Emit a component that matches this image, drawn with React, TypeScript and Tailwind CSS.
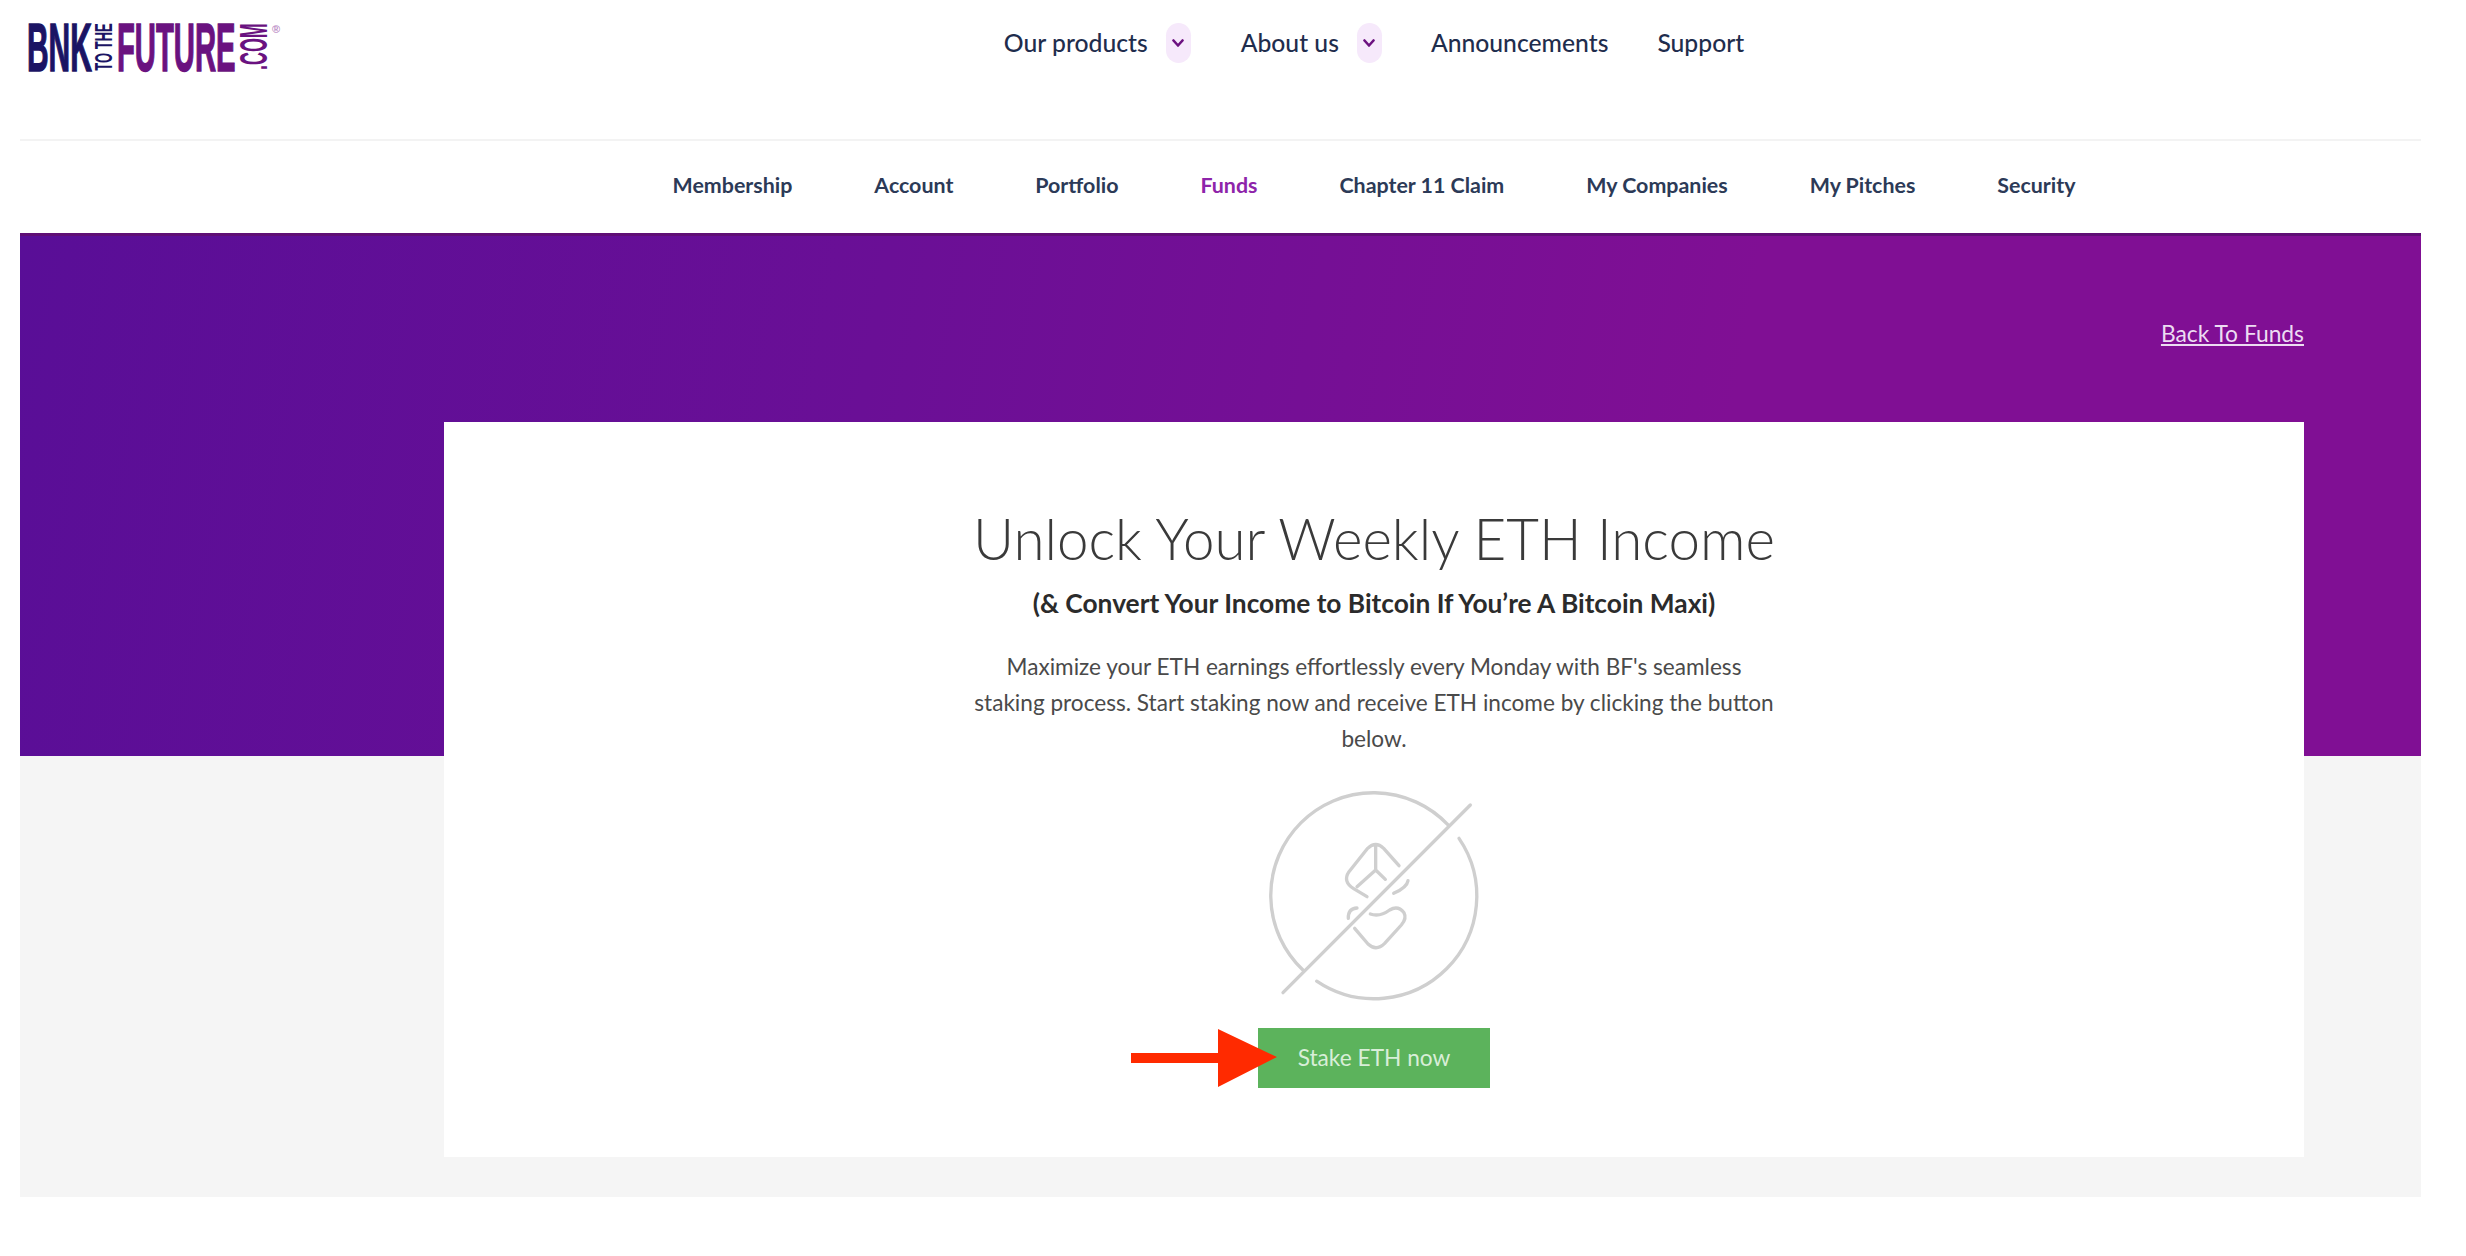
import React from "react";

const lato = "font-['Lato','Liberation_Sans',sans-serif]";
const logoFont = "font-['Liberation_Sans',Arial,sans-serif] font-bold";

function Chevron() {
  return (
    <span className="flex h-[40px] w-[25px] items-center justify-center rounded-full bg-[#f6e9fb]">
      <svg width="12" height="10" viewBox="0 0 12 10" fill="none">
        <path d="M1.5 2.5 L6 7.5 L10.5 2.5" stroke="#6c1180" strokeWidth="2.6" strokeLinecap="round" strokeLinejoin="round" />
      </svg>
    </span>
  );
}

function Logo() {
  return (
    <div className={`flex h-[50px] items-center ${logoFont}`}>
      <div className="relative h-[50px] w-[66px] text-[#1b1464]">
        <span className="absolute left-0 top-1/2 origin-left -translate-y-1/2 scale-x-[0.44] whitespace-nowrap text-[68px] leading-[0.75] [-webkit-text-stroke:1.5px_#1b1464]">BNK</span>
      </div>
      <div className="flex h-[50px] w-[22px] items-center justify-center text-[#1b1464]">
        <span className="-rotate-90 scale-x-[0.54] whitespace-nowrap text-[24px] leading-[0.75]">TO THE</span>
      </div>
      <div className="relative ml-[2px] h-[50px] w-[122px] text-[#6a1280]">
        <span className="absolute left-0 top-1/2 origin-left -translate-y-1/2 scale-x-[0.43] whitespace-nowrap text-[68px] leading-[0.75] [-webkit-text-stroke:1.5px_#6a1280]">FUTURE</span>
      </div>
      <div className="flex h-[50px] w-[30px] items-center justify-center text-[#6a1280]">
        <span className="-rotate-90 scale-x-[0.46] whitespace-nowrap text-[39px] leading-[0.75]">.COM</span>
      </div>
      <span className="ml-[3px] -mt-[36px] text-[11px] leading-none text-[#b98ac4]">®</span>
    </div>
  );
}

function StakeIcon() {
  return (
    <svg width="300" height="250" viewBox="13 0 900 750" fill="none" stroke="#cfcfcf" strokeWidth="10" strokeLinecap="round" strokeLinejoin="round">
      <path d="M718 205 A308 308 0 0 1 291 633.5" />
      <path d="M249.8 600.2 A308 308 0 1 1 685.2 164.8" />
      <path d="M190 668 L752 105" />
      <path d="M538 287 L492 235 Q468 212 444 235 L388 305 Q368 335 402 356 L442 380" />
      <path d="M468 225 L468 300 L412 350 M468 300 L497 328" />
      <path d="M565 332 Q562 352 522 370" />
      <path d="M412 414 Q385 415 386 445" />
      <path d="M452 432 Q480 442 510 420 Q535 405 553 428 Q562 445 545 465 L495 520 Q470 545 445 522 L405 475" />
    </svg>
  );
}

export default function App() {
  const subnav = ["Membership", "Account", "Portfolio", "Funds", "Chapter 11 Claim", "My Companies", "My Pitches", "Security"];
  return (
    <div className={`min-h-[1256px] w-[2466px] bg-white ${lato}`}>
      <div className="ml-[20px] w-[2401px]">
        <header className="flex h-[141px] border-b-2 border-[#f3f3f3]">
          <div className="w-[424px] pl-[7px] pt-[22px]">
            <Logo />
          </div>
          <nav className="flex h-[86px] flex-1 items-center justify-center pr-[117px] text-[24.7px] font-medium text-[#1f2d4d]">
            <span>Our products</span>
            <span className="ml-[18px]"><Chevron /></span>
            <span className="ml-[50px]">About us</span>
            <span className="ml-[18px]"><Chevron /></span>
            <span className="ml-[49px]">Announcements</span>
            <span className="ml-[49px]">Support</span>
          </nav>
        </header>

        <nav className="flex h-[90px] items-center justify-center gap-[82px] pb-[1px] pl-[424px] pr-[117px] text-[21.4px] font-bold text-[#2c3a57]">
          {subnav.map((s) => (
            <span key={s} className={s === "Funds" ? "text-[#8e24aa]" : ""}>{s}</span>
          ))}
        </nav>

        <section className="mt-[2px] bg-[#f5f5f5] pb-[40px]">
          <div className="flex h-[523px] justify-end border-t-[3px] border-[#5f0e75] bg-[linear-gradient(100deg,#590e97_0%,#6a0f96_35%,#800f94_70%,#800f94_100%)] pr-[117px] pt-[83px]">
            <a className="h-fit text-[22.8px] leading-[28px] text-[#ecdcf2] underline">Back To Funds</a>
          </div>
          <div className="relative ml-[424px] -mt-[334px] flex h-[735px] w-[1860px] flex-col items-center bg-white pt-[81px]">
            <h1 className="text-[56.5px] font-light leading-[70px] text-[#3a3a3a]">Unlock Your Weekly ETH Income</h1>
            <h2 className="mt-[12px] text-[26.3px] font-bold leading-[36px] text-[#2b2b2b]">(&amp; Convert Your Income to Bitcoin If You’re A Bitcoin Maxi)</h2>
            <p className="mt-[28px] w-[806px] text-center text-[22.6px] leading-[36px] text-[#4a4a4a]">
              Maximize your ETH earnings effortlessly every Monday with BF's seamless staking process. Start staking now and receive ETH income by clicking the button below.
            </p>
            <div className="mt-[13px]"><StakeIcon /></div>
            <div className="relative mt-[8px]">
              <button className="block h-[60px] w-[232px] bg-[#5cb35c] text-[22.7px] text-[#d8eed8]">Stake ETH now</button>
              <svg className="absolute -left-[127px] top-0" width="146" height="60" viewBox="0 0 146 60">
                <path d="M0 25 H87 V1 L146 29 L87 59 V35 H0 Z" fill="#ff2a00" />
              </svg>
            </div>
          </div>
        </section>
      </div>
    </div>
  );
}
